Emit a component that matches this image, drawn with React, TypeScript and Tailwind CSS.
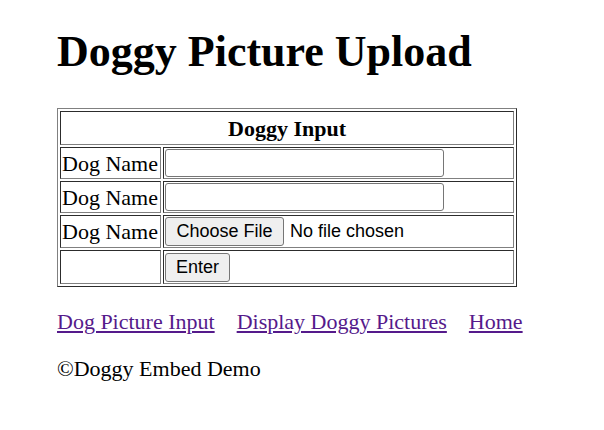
export default function App() {
  const cell = "border border-[#808080] [border-style:inset] p-px";
  return (
    <div className="min-h-screen bg-white pt-[26px] pl-[57px] text-black font-['Liberation_Serif',serif] text-[22px]">
      <h1 className="text-[44px] font-bold leading-[51px]">Doggy Picture Upload</h1>

      <table className="mt-[31px] w-[460px] border-separate border-spacing-[2px] border border-[#808080] [border-style:outset] leading-[25px]">
        <tbody>
          <tr>
            <th colSpan={2} className={`${cell} h-[34px] text-center font-bold`}>
              Doggy Input
            </th>
          </tr>
          <tr>
            <td className={`${cell} w-[101px] whitespace-nowrap`}>Dog Name</td>
            <td className={cell}>
              <input
                type="text"
                className="block h-[28px] w-[279px] rounded-[3px] border border-[#767676] px-1 font-['Liberation_Sans',sans-serif] text-[18px]"
              />
            </td>
          </tr>
          <tr>
            <td className={`${cell} whitespace-nowrap`}>Dog Name</td>
            <td className={cell}>
              <input
                type="text"
                className="block h-[28px] w-[279px] rounded-[3px] border border-[#767676] px-1 font-['Liberation_Sans',sans-serif] text-[18px]"
              />
            </td>
          </tr>
          <tr>
            <td className={`${cell} whitespace-nowrap`}>Dog Name</td>
            <td className={cell}>
              <div className="flex items-center font-['Liberation_Sans',sans-serif] text-[18px]">
                <span className="flex h-[29px] w-[119px] items-center justify-center rounded-[3px] border border-[#767676] bg-[#efefef]">
                  Choose File
                </span>
                <span className="ml-[6px]">No file chosen</span>
              </div>
            </td>
          </tr>
          <tr>
            <td className={`${cell} h-[34px]`}></td>
            <td className={`${cell} h-[34px]`}>
              <button
                type="button"
                className="flex h-[29px] w-[65px] items-center justify-center rounded-[3px] border border-[#767676] bg-[#efefef] font-['Liberation_Sans',sans-serif] text-[18px]"
              >
                Enter
              </button>
            </td>
          </tr>
        </tbody>
      </table>

      <p className="mt-[22px] flex gap-[22px] leading-[25px]">
        <a href="#" className="text-[#551a8b] underline">Dog Picture Input</a>
        <a href="#" className="text-[#551a8b] underline">Display Doggy Pictures</a>
        <a href="#" className="text-[#551a8b] underline">Home</a>
      </p>

      <p className="mt-[22px] leading-[25px]">©Doggy Embed Demo</p>
    </div>
  );
}
